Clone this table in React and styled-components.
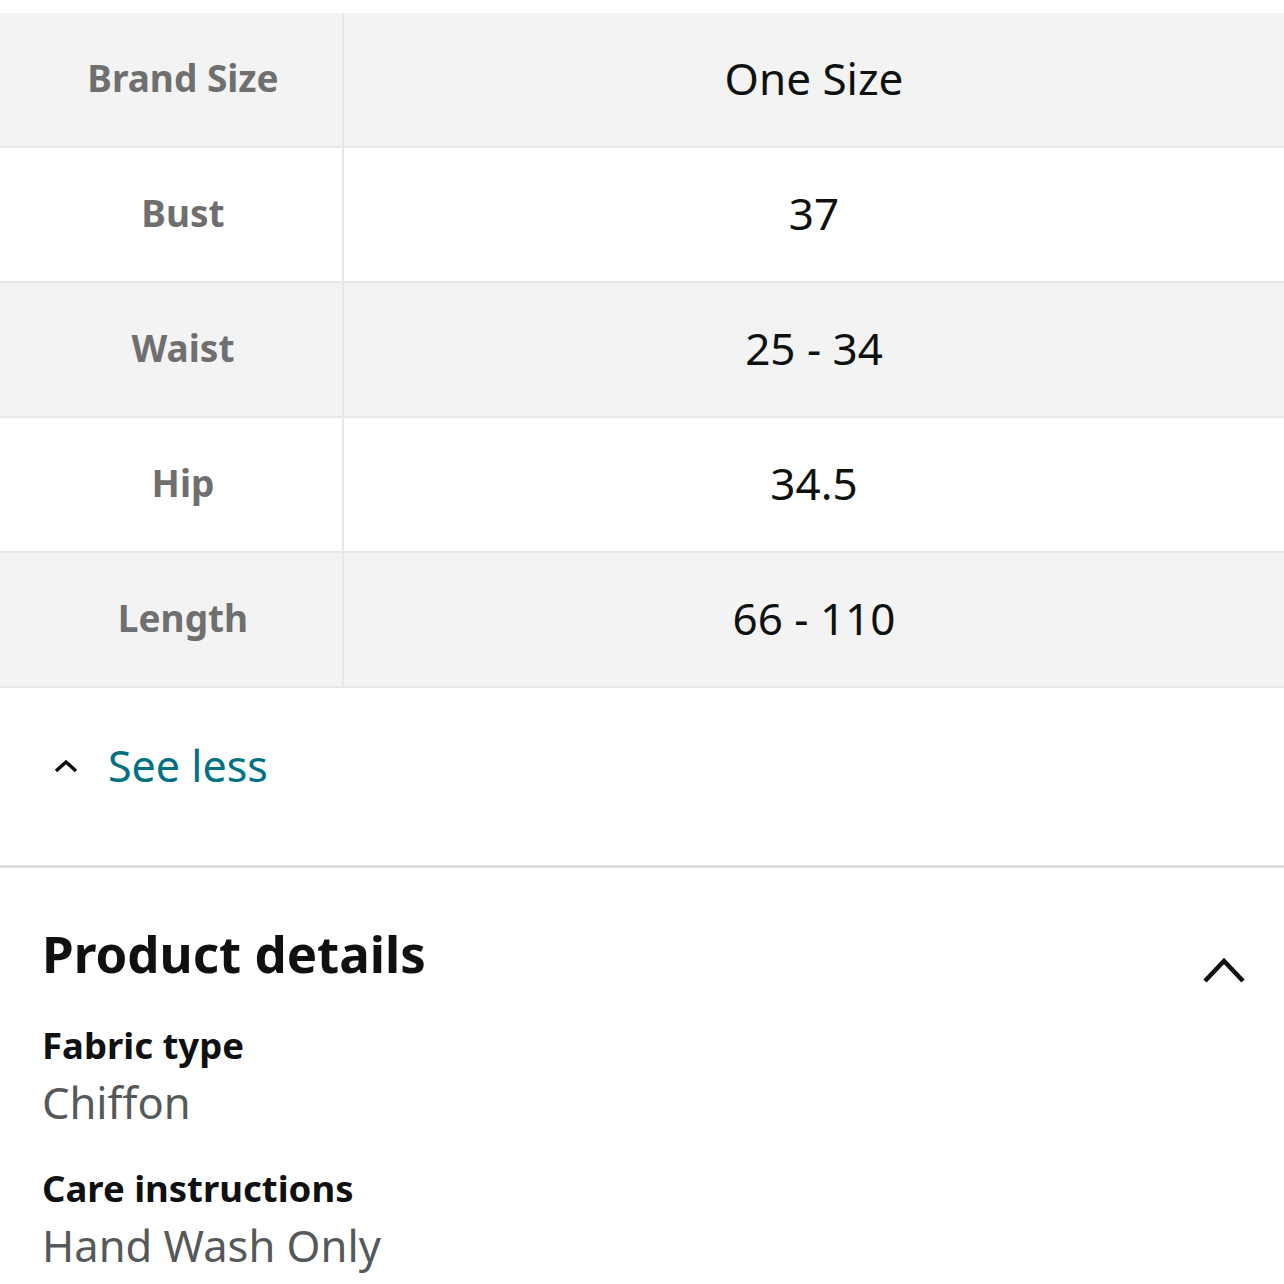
import React from 'react';
import styled, { createGlobalStyle } from 'styled-components';

const GlobalStyle = createGlobalStyle`
  body {
    margin: 0;
    background: #ffffff;
    font-family: "Noto Sans", "Open Sans", sans-serif;
    color: #0f1111;
  }
`;

const Page = styled.div`
  width: 1284px;
  padding-top: 13px;
`;

const Table = styled.div`
  display: grid;
  grid-template-columns: 344px 1fr;
  border-bottom: 2px solid #e7e7e7;
`;

// first row has no top border, the rest share a 2px line with the row above
const Cell = styled.div`
  box-sizing: border-box;
  height: ${(p) => (p.first ? 133 : 135)}px;
  padding-bottom: 4px;
  display: flex;
  align-items: center;
  justify-content: center;
  background: ${(p) => (p.shaded ? '#f3f3f3' : '#ffffff')};
  border-top: ${(p) => (p.first ? 'none' : '2px solid #e7e7e7')};
  ${(p) => p.label && 'border-right: 2px solid #e7e7e7; padding-left: 24px;'}
`;

const Label = styled.span`
  font-size: 37px;
  font-weight: 700;
  color: #6f6f6f;
`;

const Value = styled.span`
  font-size: 44px;
  color: #0f1111;
`;

const SeeLess = styled.div`
  height: 177px;
  display: flex;
  align-items: center;
  gap: 30px;
  padding-left: 54px;
  border-bottom: 3px solid #dddddd;
`;

const SeeLessText = styled.span`
  font-size: 43px;
  color: #007185;
  padding-bottom: 22px;
`;

const Chevron = styled.svg`
  display: block;
  margin-bottom: 22px;
`;

const Details = styled.section`
  padding: 55px 38px 0 42px;
`;

const Header = styled.div`
  display: flex;
  justify-content: space-between;
  align-items: flex-start;
`;

const Title = styled.h2`
  margin: 0;
  font-size: 51px;
  font-weight: 700;
  line-height: 60px;
`;

const CollapseIcon = styled.svg`
  display: block;
  margin-top: 32px;
`;

const Item = styled.div`
  margin-top: ${(p) => p.gap}px;
`;

const ItemName = styled.div`
  font-size: 36.5px;
  font-weight: 700;
  line-height: 44px;
`;

const ItemValue = styled.div`
  margin-top: 5px;
  font-size: 43.5px;
  color: #565959;
  line-height: 60px;
`;

const rows = [
  ['Brand Size', 'One Size'],
  ['Bust', '37'],
  ['Waist', '25 - 34'],
  ['Hip', '34.5'],
  ['Length', '66 - 110'],
];

export default function App() {
  return (
    <Page>
      <GlobalStyle />
      <Table>
        {rows.map(([label, value], i) => (
          <React.Fragment key={label}>
            <Cell label shaded={i % 2 === 0} first={i === 0}>
              <Label>{label}</Label>
            </Cell>
            <Cell shaded={i % 2 === 0} first={i === 0}>
              <Value>{value}</Value>
            </Cell>
          </React.Fragment>
        ))}
      </Table>
      <SeeLess>
        <Chevron width="24" height="16" viewBox="0 0 24 16">
          <path d="M2 13 L12 4 L22 13" fill="none" stroke="#0f1111" strokeWidth="3.5" />
        </Chevron>
        <SeeLessText>See less</SeeLessText>
      </SeeLess>
      <Details>
        <Header>
          <Title>Product details</Title>
          <CollapseIcon width="44" height="30" viewBox="0 0 44 30">
            <path d="M3 26 L22 6 L41 26" fill="none" stroke="#0f1111" strokeWidth="4.5" />
          </CollapseIcon>
        </Header>
        <Item gap={38}>
          <ItemName>Fabric type</ItemName>
          <ItemValue>Chiffon</ItemValue>
        </Item>
        <Item gap={34}>
          <ItemName>Care instructions</ItemName>
          <ItemValue>Hand Wash Only</ItemValue>
        </Item>
      </Details>
    </Page>
  );
}
